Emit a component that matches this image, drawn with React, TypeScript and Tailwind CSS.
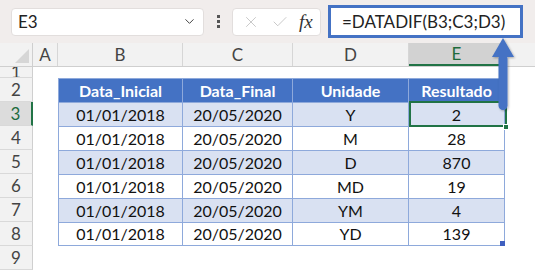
import { ChevronDown, X, Check } from 'lucide-react';

const rows = [
  { a: '01/01/2018', b: '20/05/2020', u: 'Y', r: '2' },
  { a: '01/01/2018', b: '20/05/2020', u: 'M', r: '28' },
  { a: '01/01/2018', b: '20/05/2020', u: 'D', r: '870' },
  { a: '01/01/2018', b: '20/05/2020', u: 'MD', r: '19' },
  { a: '01/01/2018', b: '20/05/2020', u: 'YM', r: '4' },
  { a: '01/01/2018', b: '20/05/2020', u: 'YD', r: '139' },
];

const cols = ['A', 'B', 'C', 'D', 'E'];
const widths = ['w-[25px]', 'w-[125px]', 'w-[110px]', 'w-[116px]', 'w-[96px]'];

function RowHead({ n, active = false, short = false }: { n: string; active?: boolean; short?: boolean }) {
  return (
    <div
      className={`${short ? 'h-[11px] leading-[11px] items-end' : 'h-[24px] items-center'} w-[33px] shrink-0 flex justify-center border-b border-[#d9d9d9] ${
        active ? 'bg-[#dcdcdc] text-[#1e6b3c] border-r-2 border-r-[#217346]' : 'bg-[#f2f2f2] text-[#444] border-r border-r-[#cfcfcf]'
      } text-[17px] overflow-hidden`}
    >
      {n}
    </div>
  );
}

function Cell({ w, children, cls = '' }: { w: string; children?: React.ReactNode; cls?: string }) {
  return <div className={`${w} shrink-0 h-full flex items-center justify-center ${cls}`}>{children}</div>;
}

export default function App() {
  return (
    <div className="relative w-[535px] h-[270px] overflow-hidden bg-white font-['Lato','Open_Sans',sans-serif]">
      {/* formula bar */}
      <div className="h-[43px] bg-[#f1edec] flex items-center pl-[11px]">
        <div className="w-[193px] h-[28px] bg-white rounded-[4px] border border-[#e2dedd] flex items-center justify-between px-[6px]">
          <span className="text-[17px] text-[#222]">E3</span>
          <ChevronDown size={15} strokeWidth={1.6} className="text-[#444]" />
        </div>
        <div className="w-[28px] flex flex-col items-center gap-[2px]">
          <span className="w-[3px] h-[3px] bg-[#555]" />
          <span className="w-[3px] h-[3px] bg-[#555]" />
          <span className="w-[3px] h-[3px] bg-[#555]" />
        </div>
        <div className="w-[89px] h-[28px] bg-white rounded-[4px] border border-[#e2dedd] flex items-center justify-around pl-[4px] pr-[2px]">
          <X size={18} strokeWidth={1.1} className="text-[#bdbdbd]" />
          <Check size={18} strokeWidth={1.1} className="text-[#bdbdbd]" />
          <span className="font-['Liberation_Serif',serif] italic text-[19px] text-[#333] leading-none">fx</span>
        </div>
        <div className="ml-[7px] w-[195px] h-[33px] border-[3px] border-[#4472c4] bg-white flex items-center pl-[11px]">
          <span className="text-[17px] text-[#222]">=DATADIF(B3;C3;D3)</span>
        </div>
      </div>

      {/* column headers */}
      <div className="h-[24px] flex bg-[#f2f2f2] border-b border-[#cfcfcf] text-[17px] text-[#444]">
        <div className="w-[33px] shrink-0 border-r border-[#cfcfcf] relative">
          <svg className="absolute right-[3px] bottom-[3px]" width="14" height="14" viewBox="0 0 14 14">
            <path d="M14 0 L14 14 L0 14 Z" fill="#d6d6d6" />
          </svg>
        </div>
        {cols.map((c, i) => (
          <div
            key={c}
            className={`${widths[i]} shrink-0 flex items-center justify-center border-r border-[#d6d6d6] ${
              c === 'E' ? 'bg-[#d2d2d2] text-[#1e6b3c] border-b-2 border-b-[#217346]' : ''
            }`}
          >
            {c}
          </div>
        ))}
      </div>

      {/* sheet body */}
      <div className="flex flex-col">
        <div className="flex h-[11px]">
          <RowHead n="1" short />
        </div>
        <div className="flex h-[24px]">
          <RowHead n="2" />
          <div className="w-[25px] shrink-0" />
          <div className="flex h-full bg-[#4472c4] text-white font-bold text-[16px] border border-[#8ea9db] border-b-0">
            <Cell w="w-[124px]" cls="border-r border-[#8ea9db]">Data_Inicial</Cell>
            <Cell w="w-[110px]" cls="border-r border-[#8ea9db]">Data_Final</Cell>
            <Cell w="w-[116px]" cls="border-r border-[#8ea9db]">Unidade</Cell>
            <Cell w="w-[95px]">Resultado</Cell>
          </div>
        </div>
        {rows.map((r, i) => (
          <div key={i} className="flex h-[24px]">
            <RowHead n={String(i + 3)} active={i === 0} />
            <div className="w-[25px] shrink-0" />
            <div
              className={`flex h-full text-[16px] text-[#111] border-x border-t border-[#8ea9db] ${
                i === rows.length - 1 ? 'border-b' : ''
              } ${i % 2 === 0 ? 'bg-[#d9e1f2]' : 'bg-white'}`}
            >
              <Cell w="w-[124px]" cls="border-r border-[#8ea9db]">{r.a}</Cell>
              <Cell w="w-[110px]" cls="border-r border-[#8ea9db]">{r.b}</Cell>
              <Cell w="w-[116px]" cls="border-r border-[#8ea9db]">{r.u}</Cell>
              <Cell w="w-[95px]">{r.r}</Cell>
            </div>
          </div>
        ))}
        <div className="flex h-[24px]">
          <RowHead n="9" />
        </div>
      </div>

      {/* active cell outline + fill handle */}
      <div className="absolute left-[409px] top-[101px] w-[98px] h-[26px] border-2 border-[#217346]" />
      <div className="absolute left-[503px] top-[124px] w-[6px] h-[6px] bg-[#217346] border border-white" />
      {/* table resize corner */}
      <div className="absolute left-[500px] top-[241px] w-[5px] h-[5px] bg-[#3f5fbf]" />

      {/* callout arrow */}
      <svg className="absolute left-[488px] top-[36px]" width="32" height="78" viewBox="0 0 32 78">
        <defs>
          <filter id="sh" x="-50%" y="-50%" width="200%" height="200%">
            <feDropShadow dx="1" dy="1" stdDeviation="1" floodColor="#000" floodOpacity="0.3" />
          </filter>
        </defs>
        <g filter="url(#sh)">
          <rect x="10.5" y="18" width="9" height="56" rx="4.5" fill="#4472c4" />
          <path d="M15 2 L26 21 L4 21 Z" fill="#4472c4" />
        </g>
      </svg>
    </div>
  );
}
